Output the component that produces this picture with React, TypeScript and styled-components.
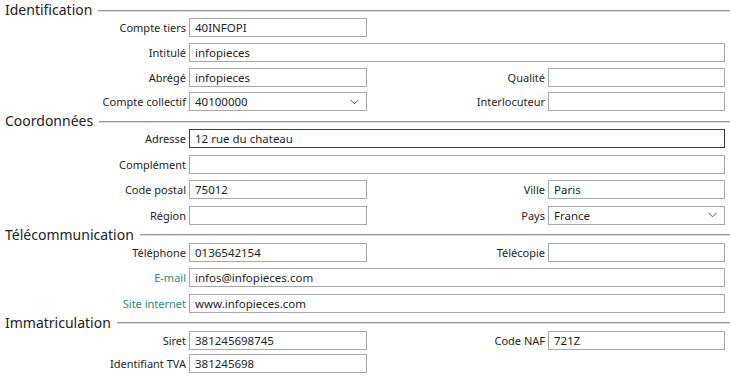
import React, { FC } from "react";
import styled, { createGlobalStyle } from "styled-components";

const GlobalStyle = createGlobalStyle`
  html, body {
    margin: 0;
    padding: 0;
    background: #ffffff;
  }
  body {
    font-family: "Noto Sans", "Open Sans", sans-serif;
    color: #1e1e1e;
  }
`;

const Page = styled.div`
  width: 730px;
  height: 376px;
  overflow: hidden;
  background: #ffffff;
  padding-top: 2px;
  box-sizing: border-box;
`;

const Section = styled.section`
  display: flex;
  flex-direction: column;
  margin-bottom: 2px;
`;

const Header = styled.div`
  display: flex;
  align-items: center;
  height: 16px;
  padding-left: 5px;
  gap: 6px;
`;

const HeaderText = styled.span`
  font-size: 14px;
  line-height: 16px;
  color: #222222;
  white-space: nowrap;
`;

const HeaderLine = styled.div`
  flex: 1;
  height: 1px;
  background: #9a9a9a;
  box-shadow: 0 1px 0 #dcdcdc;
`;

const Grid = styled.div<{ $gap?: number }>`
  display: grid;
  grid-template-columns: 186px 178px 1fr 177px;
  column-gap: 3px;
  row-gap: ${(p) => (p.$gap ?? 6.5)}px;
  padding-right: 5px;
`;

const Label = styled.label<{ $link?: boolean }>`
  font-size: 11px;
  line-height: 19px;
  text-align: right;
  white-space: nowrap;
  color: ${(p) => (p.$link ? "#2f8a78" : "#1e1e1e")};
`;

const Field = styled.div<{ $wide?: boolean; $focused?: boolean }>`
  grid-column: ${(p) => (p.$wide ? "2 / 5" : "auto")};
  height: 19px;
  box-sizing: border-box;
  border: 1px solid ${(p) => (p.$focused ? "#3c3c3c" : "#a8a8a8")};
  background: #ffffff;
  display: flex;
  align-items: center;
  padding: 0 5px;
  font-size: 11.5px;
  color: #1e1e1e;
  white-space: nowrap;
  overflow: hidden;
`;

const Value = styled.span`
  flex: 1;
`;

const Chevron = styled.svg`
  width: 9px;
  height: 6px;
  margin-right: 2px;
  flex-shrink: 0;
`;

const Spacer = styled.div``;

interface IRow {
  label: string;
  value?: string;
  link?: boolean;
  wide?: boolean;
  focused?: boolean;
  select?: boolean;
}

const Input: FC<IRow> = ({ label, value, link, wide, focused, select }) => (
  <>
    <Label $link={link}>{label}</Label>
    <Field $wide={wide} $focused={focused}>
      <Value>{value}</Value>
      {select && (
        <Chevron viewBox="0 0 9 6">
          <path d="M0.5 0.8 L4.5 4.8 L8.5 0.8" fill="none" stroke="#555" strokeWidth="1" />
        </Chevron>
      )}
    </Field>
  </>
);

const Block: FC<{ title: string; children: React.ReactNode; gap?: number }> = ({
  title,
  children,
  gap,
}) => (
  <Section>
    <Header>
      <HeaderText>{title}</HeaderText>
      <HeaderLine />
    </Header>
    <Grid $gap={gap}>{children}</Grid>
  </Section>
);

const App: FC = () => {
  return (
    <Page>
      <GlobalStyle />
      <Block title="Identification" gap={5.8}>
        <Input label="Compte tiers" value="40INFOPI" />
        <Spacer />
        <Spacer />
        <Input label="Intitulé" value="infopieces" wide />
        <Input label="Abrégé" value="infopieces" />
        <Input label="Qualité" />
        <Input label="Compte collectif" value="40100000" select />
        <Input label="Interlocuteur" />
      </Block>
      <Block title="Coordonnées">
        <Input label="Adresse" value="12 rue du chateau" wide focused />
        <Input label="Complément" wide />
        <Input label="Code postal" value="75012" />
        <Input label="Ville" value="Paris" />
        <Input label="Région" />
        <Input label="Pays" value="France" select />
      </Block>
      <Block title="Télécommunication">
        <Input label="Téléphone" value="0136542154" />
        <Input label="Télécopie" />
        <Input label="E-mail" value="infos@infopieces.com" link wide />
        <Input label="Site internet" value="www.infopieces.com" link wide />
      </Block>
      <Block title="Immatriculation" gap={4}>
        <Input label="Siret" value="381245698745" />
        <Input label="Code NAF" value="721Z" />
        <Input label="Identifiant TVA" value="381245698" />
      </Block>
    </Page>
  );
};

export default App;
